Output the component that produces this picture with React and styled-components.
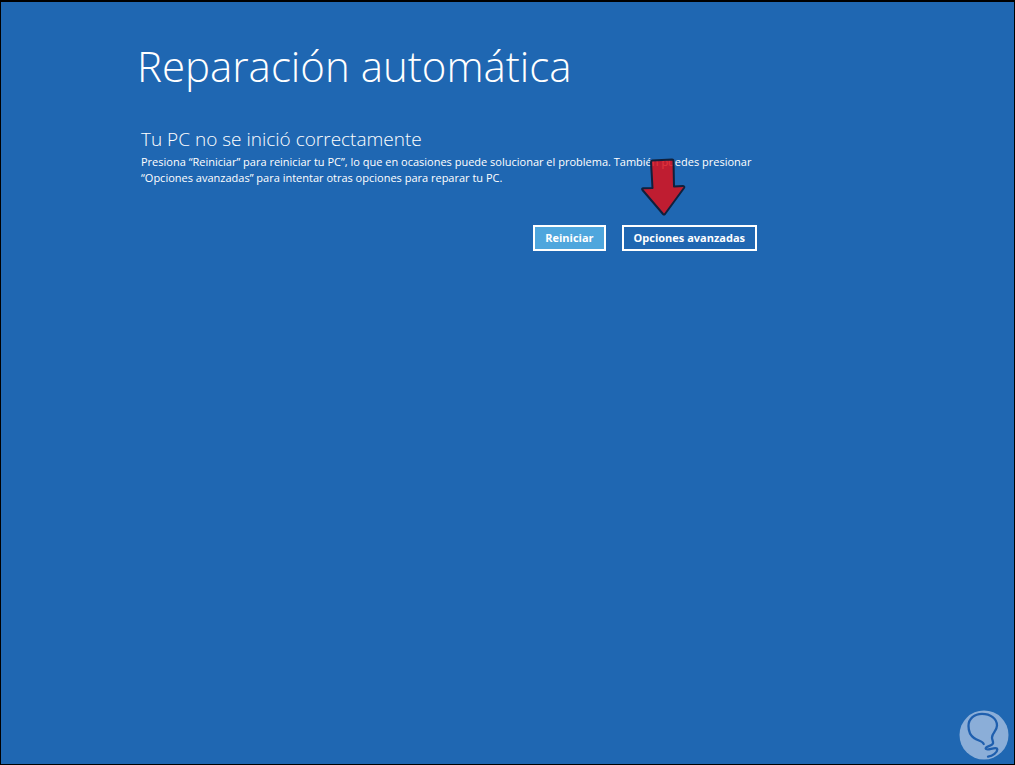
import React from 'react'
import styled, { createGlobalStyle } from 'styled-components'

const App = () => {
    return (
        <>
            <GlobalStyle/>
            <Screen>
                <Content>
                    <Title>Reparación automática</Title>
                    <Message>
                        <Subtitle>Tu PC no se inició correctamente</Subtitle>
                        <Text>
                            Presiona “Reiniciar” para reiniciar tu PC”, lo que en ocasiones puede solucionar el problema. También puedes presionar
                            “Opciones avanzadas” para intentar otras opciones para reparar tu PC.
                        </Text>
                    </Message>
                    <Actions>
                        <Button type="button" $primary>Reiniciar</Button>
                        <Target>
                            <Arrow viewBox="0 0 46 60" aria-hidden="true">
                                <path d="M12 3.500L32 2.500Q33.500 2.500 33.500 4L34 29.500L43 29Q45 29.300 44 31L25 57Q24 58 23 57L2.500 33Q1.500 31.500 3 31.300L12.500 31L11 5Q11 3.500 12 3.500Z"/>
                            </Arrow>
                            <Button type="button">Opciones avanzadas</Button>
                        </Target>
                    </Actions>
                </Content>
                <Logo viewBox="0 0 50 50" aria-hidden="true">
                    <circle cx="25" cy="25" r="24.5"/>
                    <path d="M24.700 34C23.500 30.500 19 31 15 28C11.500 25.500 9.500 20.500 9.500 16C9.500 8.500 15.500 3.900 23 3.900C31.500 3.900 38 8.500 38 15.500C38 21 33 23 33 27.500C33 30 34.500 31.500 34 33.500C32.500 36.500 26.700 36 26.700 38.700C27.500 41.500 38 35.500 38.300 39.500C38.300 42.500 34 46 29 46.700"/>
                </Logo>
            </Screen>
        </>
    )
}

export default App

const GlobalStyle=createGlobalStyle`
*{
    box-sizing:border-box;
}
body{
    margin:0;
    background:#1f67b2;
    color:#fff;
    font-family:'Open Sans','Noto Sans',sans-serif;
}
`
const Screen=styled.main`
position:relative;
min-height:100vh;
background:#1f67b2;
border:1px solid #000;
border-top-width:2px;
`
const Content=styled.section`
max-width:756px;
padding:34px 0 0 136px;
`
const Title=styled.h1`
margin:0;
font-size:42px;
line-height:60px;
font-weight:300;
white-space:nowrap;
`
const Message=styled.div`
padding:29px 0 0 4px;
`
const Subtitle=styled.h2`
margin:0;
font-size:19px;
line-height:28px;
font-weight:300;
`
const Text=styled.p`
margin:0;
padding-top:1px;
font-size:11px;
line-height:16px;
`
const Actions=styled.div`
display:flex;
justify-content:flex-end;
gap:16px;
padding-top:39px;
`
const Target=styled.div`
position:relative;
`
const Button=styled.button`
height:26px;
padding:0 10px;
border:2px solid #fff;
background:${props=>props.$primary ? '#4ea6dd' : 'transparent'};
color:#fff;
font-family:inherit;
font-size:11px;
font-weight:700;
line-height:16px;
cursor:pointer;
`
const Arrow=styled.svg`
position:absolute;
left:18px;
bottom:34px;
width:46px;
height:60px;
pointer-events:none;

path{
    fill:#dc101a;
    fill-opacity:.85;
    stroke:#10203c;
    stroke-width:2;
    stroke-linejoin:round;
}
`
const Logo=styled.svg`
position:absolute;
right:5px;
bottom:4px;
width:50px;
height:50px;

circle{
    fill:#8baed8;
}
path{
    fill:none;
    stroke:#1f5fae;
    stroke-width:2.3;
    stroke-linecap:round;
    stroke-linejoin:round;
}
`
